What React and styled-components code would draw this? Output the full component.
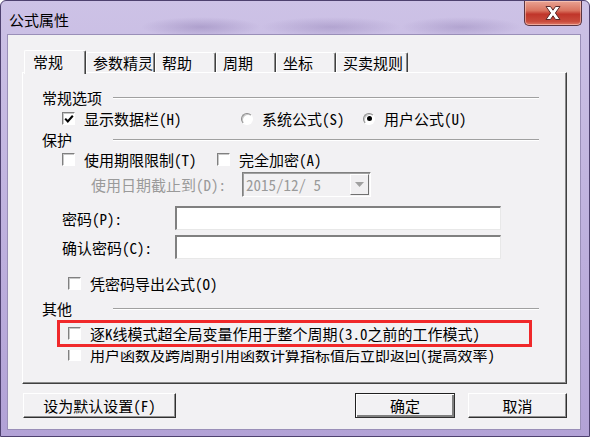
import React from 'react';
import styled, { createGlobalStyle } from 'styled-components';

const GlobalStyle = createGlobalStyle`
    html, body {
        margin: 0;
        padding: 0;
        background: #ffffff;
    }
    body {
        font-family: "Noto Sans Mono CJK SC", "Noto Sans CJK SC", "DejaVu Sans Mono", monospace;
        font-size: 15px;
        color: #000;
    }
    * {
        box-sizing: border-box;
    }
`;

const tabs = [
    { label: '常规', width: 62, active: true },
    { label: '参数精灵', width: 69 },
    { label: '帮助', width: 61 },
    { label: '周期', width: 60 },
    { label: '坐标', width: 60 },
    { label: '买卖规则', width: 72 },
];

const Check = ({ checked }) => (
    <CheckBox>
        {checked && (
            <svg width="10" height="10" viewBox="0 0 10 10">
                <path d="M1.2 4.6 L3.8 7.4 L8.8 1.8" stroke="#000" strokeWidth="2.1" fill="none" />
            </svg>
        )}
    </CheckBox>
);

const Option = ({ kind = 'check', checked, label, width }) => (
    <OptionWrap $width={width}>
        {kind === 'radio' ? <Radio $on={checked} /> : <Check checked={checked} />}
        <span>{label}</span>
    </OptionWrap>
);

const Section = ({ title, top }) => (
    <SectionHeader $top={top}>
        <SectionTitle>{title}</SectionTitle>
        <Groove />
    </SectionHeader>
);

export default function App() {
    return (
        <>
            <GlobalStyle />
            <Window>
                <TitleBar>
                    <Title>公式属性</Title>
                    <CloseButton>
                        <svg width="22" height="16" viewBox="0 0 22 16">
                            <path
                                d="M4 1.5 H8.5 L11 5.2 L13.5 1.5 H18 L13.4 8 L18 14.5 H13.5 L11 10.8 L8.5 14.5 H4 L8.6 8 Z"
                                fill="#ffffff"
                                stroke="#5a2a2a"
                                strokeWidth="1"
                                strokeLinejoin="round"
                            />
                        </svg>
                    </CloseButton>
                </TitleBar>
                <Client>
                    <TabStrip>
                        {tabs.map((t) => (
                            <Tab key={t.label} $width={t.width} $active={t.active}>
                                {t.label}
                            </Tab>
                        ))}
                    </TabStrip>
                    <Panel>
                        <Section title="常规选项" />
                        <Row $h={21}>
                            <Option checked label="显示数据栏(H)" width={179} />
                            <Option kind="radio" label="系统公式(S)" width={122} />
                            <Option kind="radio" checked label="用户公式(U)" />
                        </Row>
                        <Section title="保护" />
                        <Row $h={18}>
                            <Option label="使用期限限制(T)" width={155} />
                            <Option label="完全加密(A)" />
                        </Row>
                        <Row $h={26} $top={3}>
                            <DisabledLabel>使用日期截止到(D):</DisabledLabel>
                            <DateBox>
                                <DateText>2015/12/ 5</DateText>
                                <DropButton>
                                    <svg width="9" height="5" viewBox="0 0 9 5">
                                        <path d="M0 0 H9 L4.5 5 Z" fill="#a0a0a0" />
                                    </svg>
                                </DropButton>
                            </DateBox>
                        </Row>
                        <Row $h={26} $top={8}>
                            <FieldLabel>密码(P):</FieldLabel>
                            <TextInput />
                        </Row>
                        <Row $h={26} $top={3}>
                            <FieldLabel>确认密码(C):</FieldLabel>
                            <TextInput />
                        </Row>
                        <Row $h={20} $top={13} $indent={26}>
                            <Option label="凭密码导出公式(O)" />
                        </Row>
                        <Section title="其他" top={5} />
                        <Marked>
                            <Option label="逐K线模式超全局变量作用于整个周期(3.0之前的工作模式)" />
                        </Marked>
                        <Row $h={20} $top={-3} $indent={26}>
                            <Option label="用户函数及跨周期引用函数计算指标值后立即返回(提高效率)" />
                        </Row>
                    </Panel>
                    <ButtonBar>
                        <PushButton $width={153}>设为默认设置(F)</PushButton>
                        <Spacer />
                        <PushButton $width={100} $default>
                            确定
                        </PushButton>
                        <PushButton $width={99}>取消</PushButton>
                    </ButtonBar>
                </Client>
            </Window>
        </>
    );
}

const Window = styled.div`
    width: 590px;
    height: 437px;
    display: flex;
    flex-direction: column;
    padding: 0 8px 6px 6px;
    border: 1px solid #4e416f;
    border-radius: 6px 6px 0 0;
    background: radial-gradient(ellipse 60px 10px at 200px 26px, rgba(120, 100, 160, 0.35), transparent),
        radial-gradient(ellipse 70px 10px at 330px 26px, rgba(120, 100, 160, 0.3), transparent),
        radial-gradient(ellipse 60px 10px at 460px 26px, rgba(120, 100, 160, 0.3), transparent),
        linear-gradient(180deg, #cdc2e6 0%, #c2b5e0 40%, #b2a2d6 100%);
`;

const TitleBar = styled.div`
    height: 33px;
    display: flex;
    align-items: flex-start;
    flex: none;
`;

const Title = styled.div`
    font-family: "Noto Sans CJK SC", sans-serif;
    font-size: 15px;
    line-height: 15px;
    margin: 11px 0 0 2px;
    color: #000;
`;

const CloseButton = styled.div`
    margin-left: auto;
    margin-right: -1px;
    width: 58px;
    height: 25px;
    display: flex;
    align-items: center;
    justify-content: center;
    border: 1px solid #5b3440;
    border-top: none;
    border-radius: 0 0 5px 5px;
    background: linear-gradient(180deg, #e9a393 0%, #d9735f 40%, #c0352a 55%, #c94b3c 85%, #e07a68 100%);
    box-shadow: inset 0 0 0 1px rgba(255, 220, 210, 0.5);
`;

const Client = styled.div`
    flex: 1;
    display: flex;
    flex-direction: column;
    padding: 15px 13px 0 14px;
    border: 1px solid #9a8fb8;
    background: #f2f1f3;
`;

const TabStrip = styled.div`
    display: flex;
    align-items: flex-end;
    height: 22px;
    padding-left: 2px;
    flex: none;
`;

const Tab = styled.div`
    position: relative;
    width: ${(p) => p.$width}px;
    height: ${(p) => (p.$active ? 24 : 20)}px;
    margin-bottom: ${(p) => (p.$active ? -2 : 0)}px;
    z-index: ${(p) => (p.$active ? 2 : 1)};
    padding: ${(p) => (p.$active ? '1px 0 0 8px' : '0 0 0 6px')};
    line-height: 19px;
    background: #f2f1f3;
    border-top: 1px solid #ffffff;
    border-left: 1px solid #ffffff;
    border-right: 1px solid #404040;
    border-radius: 2px 2px 0 0;
    box-shadow: inset -1px 0 0 #8a8a8a;
    white-space: nowrap;
`;

const Panel = styled.div`
    width: 545px;
    height: 312px;
    flex: none;
    display: flex;
    flex-direction: column;
    padding: 14px 27px 0 19px;
    border-top: 1px solid #ffffff;
    border-left: 1px solid #ffffff;
    border-right: 1px solid #404040;
    border-bottom: 1px solid #404040;
    box-shadow: inset -1px -1px 0 #8a8a8a;
    background: #f2f1f3;
`;

const SectionHeader = styled.div`
    display: flex;
    align-items: center;
    height: 21px;
    margin-top: ${(p) => p.$top || 0}px;
    flex: none;
`;

const SectionTitle = styled.div`
    width: 71px;
    flex: none;
    white-space: nowrap;
`;

const Groove = styled.div`
    flex: 1;
    height: 2px;
    border-top: 1px solid #a0a0a0;
    border-bottom: 1px solid #ffffff;
`;

const Row = styled.div`
    display: flex;
    align-items: center;
    height: ${(p) => p.$h}px;
    margin-top: ${(p) => p.$top || 0}px;
    padding-left: ${(p) => (p.$indent != null ? p.$indent : 20)}px;
    flex: none;
`;

const OptionWrap = styled.div`
    display: flex;
    align-items: center;
    gap: 9px;
    width: ${(p) => (p.$width ? `${p.$width}px` : 'auto')};
    flex: none;
    white-space: nowrap;
`;

const CheckBox = styled.div`
    width: 13px;
    height: 13px;
    flex: none;
    display: flex;
    align-items: center;
    justify-content: center;
    background: #ffffff;
    border-top: 1px solid #808080;
    border-left: 1px solid #808080;
    border-right: 1px solid #ffffff;
    border-bottom: 1px solid #ffffff;
    box-shadow: inset 1px 1px 0 #c8c8c8;
`;

const Radio = styled.div`
    position: relative;
    width: 12px;
    height: 12px;
    flex: none;
    border-radius: 50%;
    background: #ffffff;
    border: 1px solid;
    border-color: #8a8a8a #ffffff #ffffff #8a8a8a;
    box-shadow: inset 1px 1px 0 #c8c8c8;

    &::after {
        content: '';
        display: ${(p) => (p.$on ? 'block' : 'none')};
        position: absolute;
        left: 2.5px;
        top: 2.5px;
        width: 5px;
        height: 5px;
        border-radius: 50%;
        background: #000;
    }
`;

const DisabledLabel = styled.div`
    width: 151px;
    margin-left: 29px;
    flex: none;
    white-space: nowrap;
    color: #9a9a9a;
`;

const DateBox = styled.div`
    width: 129px;
    height: 25px;
    display: flex;
    align-items: center;
    border-top: 1px solid #808080;
    border-left: 1px solid #808080;
    border-right: 1px solid #ffffff;
    border-bottom: 1px solid #ffffff;
    box-shadow: inset 1px 1px 0 #a0a0a0;
    background: #f2f1f3;
`;

const DateText = styled.div`
    flex: 1;
    padding-left: 3px;
    color: #9a9a9a;
`;

const DropButton = styled.div`
    width: 19px;
    height: 21px;
    margin-right: 1px;
    display: flex;
    align-items: center;
    justify-content: center;
    border-top: 1px solid #ffffff;
    border-left: 1px solid #ffffff;
    border-right: 1px solid #707070;
    border-bottom: 1px solid #707070;
    background: #f0eff1;
`;

const FieldLabel = styled.div`
    width: 113px;
    flex: none;
    white-space: nowrap;
`;

const TextInput = styled.div`
    width: 326px;
    height: 24px;
    background: #ffffff;
    border-top: 2px solid #808080;
    border-left: 2px solid #808080;
    border-right: 1px solid #e8e8e8;
    border-bottom: 1px solid #e8e8e8;
`;

const Marked = styled.div`
    display: flex;
    align-items: center;
    width: 475px;
    height: 27px;
    margin: 1px 0 0 15px;
    padding-left: 8px;
    border: 3px solid #f0282a;
    background: #f2f1f3;
    flex: none;
    position: relative;
    z-index: 1;

    &::after {
        content: '';
        position: absolute;
        left: -3px;
        right: -3px;
        top: 100%;
        height: 3px;
        margin-top: 3px;
        background: #f2f1f3;
    }
`;

const ButtonBar = styled.div`
    display: flex;
    align-items: center;
    gap: 13px;
    margin-top: 9px;
    padding-left: 1px;
    flex: none;
`;

const Spacer = styled.div`
    flex: 1;
`;

const PushButton = styled.div`
    width: ${(p) => p.$width}px;
    height: 25px;
    display: flex;
    align-items: center;
    justify-content: center;
    background: #f2f1f3;
    border-top: 1px solid ${(p) => (p.$default ? '#202020' : '#ffffff')};
    border-left: 1px solid ${(p) => (p.$default ? '#202020' : '#ffffff')};
    border-right: 1px solid #303030;
    border-bottom: 1px solid #303030;
    box-shadow: ${(p) =>
        p.$default
            ? 'inset 1px 1px 0 #ffffff, inset -2px -2px 0 #808080'
            : 'inset -1px -1px 0 #909090'};
    white-space: nowrap;
`;
